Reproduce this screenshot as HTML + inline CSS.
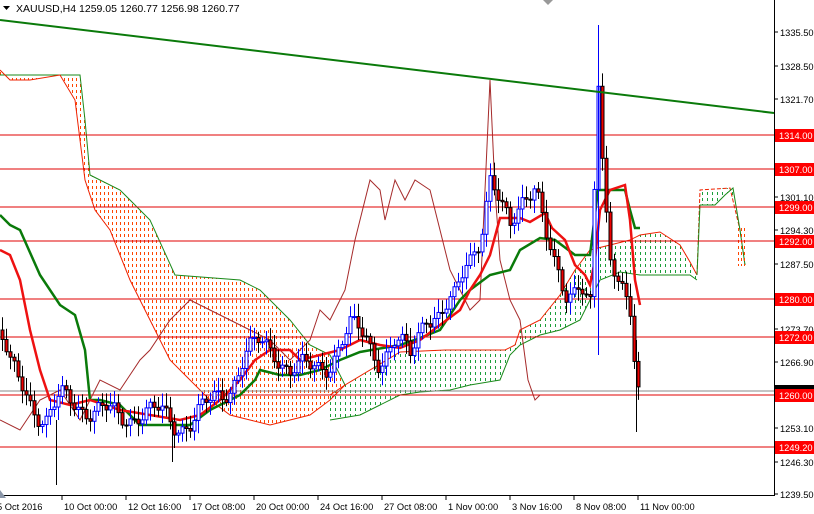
<!DOCTYPE html>
<html><head><meta charset="utf-8"><style>
html,body{margin:0;padding:0;background:#fff;width:814px;height:514px;overflow:hidden;font-family:"Liberation Sans",sans-serif}
svg{position:absolute;left:0;top:0}
</style></head><body>
<svg id="s" width="814" height="514" xmlns="http://www.w3.org/2000/svg" font-family="Liberation Sans, sans-serif" font-size="9.3">
<defs id="defs"></defs>
<g id="clouds"></g>
<g stroke="#e00000" stroke-width="1">
<line x1="0" y1="135" x2="774" y2="135"/><line x1="0" y1="169" x2="774" y2="169"/>
<line x1="0" y1="207" x2="774" y2="207"/><line x1="0" y1="241" x2="774" y2="241"/>
<line x1="0" y1="299" x2="774" y2="299"/><line x1="0" y1="337" x2="774" y2="337"/>
<line x1="0" y1="395" x2="774" y2="395"/><line x1="0" y1="447" x2="774" y2="447"/>
</g>
<line x1="0" y1="391" x2="774" y2="391" stroke="#888" stroke-width="1"/>
<g id="lines"></g>
<g id="candles"></g>
<line x1="0" y1="20" x2="774" y2="113" stroke="#0a7a0a" stroke-width="2"/>
<line x1="774.5" y1="0" x2="774.5" y2="495" stroke="#000"/>
<line x1="0" y1="495.5" x2="775" y2="495.5" stroke="#000"/>
<g id="axis"></g>
<text x="16" y="12" font-size="10.5" fill="#000">XAUUSD,H4  1259.05 1260.77 1256.98 1260.77</text>
<polygon points="3,6 10,6 6.5,10" fill="#000"/>
<polygon points="543,0 553,0 548,5" fill="#999"/>
<polygon points="0,490 0,498 6,498" fill="#8a96a8"/>
</svg>
<script>
var NS="http://www.w3.org/2000/svg";
function el(p,t,a){var e=document.createElementNS(NS,t);for(var k in a)e.setAttribute(k,a[k]);(typeof p=="string"?document.getElementById(p):p).appendChild(e);return e;}
function pl(pts){return pts.map(function(p){return p[0]+","+p[1]}).join(" ");}
var cid=0;
function cloud(poly,col,step,x0,x1){
 cid++;var cp=el("defs","clipPath",{id:"c"+cid});el(cp,"polygon",{points:poly});
 var g=el("clouds","g",{"clip-path":"url(#c"+cid+")"});
 for(var x=x0;x<=x1;x+=step)el(g,"line",{x1:x+0.5,y1:0,x2:x+0.5,y2:495,stroke:col,"stroke-width":1,"stroke-dasharray":"3,3"});
}
var oTop=[[0,75],[80,75],[85,120],[90,175],[120,190],[150,220],[175,275],[240,280],[260,290],[290,320],[310,345],[330,355],[345,385]];
var oBot=[[0,70],[10,80],[30,80],[60,75],[75,100],[85,180],[95,210],[110,230],[130,280],[150,320],[170,360],[190,380],[210,400],[230,415],[250,420],[270,425],[290,420],[310,415],[330,400],[345,385]];
cloud(pl(oTop.concat(oBot.slice().reverse())),"#ff4500",4,0,345);
el("clouds","polyline",{points:pl(oTop),fill:"none",stroke:"#1a8a1a","stroke-width":1});
el("clouds","polyline",{points:pl(oBot),fill:"none",stroke:"#ee2200","stroke-width":1});
var gTop=[[330,395],[345,385],[400,352],[445,350],[505,350],[515,345],[520,330],[540,320],[560,295],[575,270],[590,250],[610,245],[630,240],[640,235],[660,232],[680,245],[690,262],[697,275]];
var gBot=[[330,420],[360,415],[380,405],[400,395],[420,392],[450,390],[470,385],[500,380],[510,355],[520,345],[540,335],[560,330],[580,320],[600,280],[620,272],[640,275],[690,275],[697,280]];
cloud(pl(gTop.concat(gBot.slice().reverse())),"#1a9e3a",5,330,697);
el("clouds","polyline",{points:pl(gTop),fill:"none",stroke:"#ee2200","stroke-width":1});
el("clouds","polyline",{points:pl(gBot),fill:"none",stroke:"#1a8a1a","stroke-width":1});
var g2T=[[697,275],[700,190],[730,188],[740,230],[745,265]],g2B=[[697,275],[700,205],[715,205],[725,195],[733,188],[740,230],[745,265]];
cloud(pl(g2T.concat(g2B.slice().reverse())),"#1a9e3a",5,697,745);
el("clouds","polyline",{points:pl(g2T),fill:"none",stroke:"#ee2200","stroke-width":1,"stroke-dasharray":"4,2"});
el("clouds","polyline",{points:pl(g2B),fill:"none",stroke:"#1a8a1a","stroke-width":1});
cloud("738,228 745,228 745,266 738,266","#ff4500",3,738,745);
var chik=[[0,420],[20,430],[40,400],[60,390],[80,420],[100,380],[120,390],[140,360],[150,350],[170,320],[190,300],[210,310],[230,320],[250,330],[270,340],[290,360],[310,340],[320,310],[330,320],[345,290],[355,240],[370,180],[380,190],[385,220],[395,180],[405,200],[415,180],[430,190],[440,230],[450,270],[460,290],[470,310],[480,300],[490,80],[495,190],[500,260],[510,300],[520,320],[528,380],[535,400],[540,395]];
el("lines","polyline",{points:pl(chik),fill:"none",stroke:"#a52a2a","stroke-width":1});
var kij=[[0,215],[10,225],[20,230],[40,275],[60,305],[75,315],[85,350],[90,400],[100,400],[120,405],[140,425],[190,425],[210,410],[240,395],[255,380],[260,370],[280,375],[300,375],[320,370],[340,360],[360,352],[400,345],[420,338],[440,330],[460,300],[470,290],[490,275],[510,270],[520,250],[540,238],[555,240],[575,255],[590,255],[598,190],[625,190],[630,210],[635,228],[640,228]];
el("lines","polyline",{points:pl(kij),fill:"none",stroke:"#0a7a0a","stroke-width":2.5});
var ten=[[0,250],[10,255],[20,280],[30,330],[40,370],[50,400],[70,405],[90,400],[120,410],[150,415],[180,420],[200,415],[220,400],[240,380],[255,360],[270,350],[290,350],[300,360],[320,355],[340,350],[360,340],[380,345],[400,348],[420,340],[440,325],[460,310],[470,290],[480,275],[490,255],[500,218],[520,218],[530,222],[545,213],[552,228],[565,240],[575,265],[585,275],[590,285],[595,260],[600,210],[610,190],[625,185],[630,220],[635,280],[640,305]];
el("lines","polyline",{points:pl(ten),fill:"none",stroke:"#ee1111","stroke-width":2.5});
var pr=[[0,330],[10,370],[30,400],[45,420],[60,400],[80,405],[100,410],[120,420],[140,410],[160,415],[175,425],[190,420],[210,405],[230,385],[245,355],[260,345],[275,350],[290,370],[310,370],[330,360],[350,330],[365,335],[380,360],[395,345],[410,355],[425,310],[440,320],[455,300],[465,260],[480,235],[490,185],[500,210],[510,225],[520,195],[535,185],[545,240],[555,270],[565,290],[580,280],[590,310],[598,90],[604,200],[610,260],[620,270],[630,310],[637,395],[641,400]];
function py(x){for(var i=1;i<pr.length;i++){if(x<=pr[i][0]){var a=pr[i-1],b=pr[i];return a[1]+(b[1]-a[1])*(x-a[0])/(b[0]-a[0]);}}return 400;}
var prev=py(0);
for(var x=2;x<=640;x+=4){
 var c=py(x)+Math.sin(x*1.7)*10+Math.sin(x*0.37)*6, o=prev;
 var hi=Math.min(o,c)-3-Math.abs(Math.sin(x*0.9))*10, lo=Math.max(o,c)+3+Math.abs(Math.cos(x*1.3))*10;
 var up=c<o, col=up?"#0000ff":"#000";
 el("candles","line",{x1:x+0.5,y1:hi,x2:x+0.5,y2:lo,stroke:col,"stroke-width":1});
 var t=Math.min(o,c),h=Math.max(Math.abs(o-c),1);
 el("candles","rect",{x:x-1,y:t,width:3,height:h,fill:up?"#fff":"#ee0000",stroke:col,"stroke-width":1});
 prev=c;
}
el("candles","line",{x1:598.5,y1:25,x2:598.5,y2:355,stroke:"#0000ff"});
el("candles","line",{x1:636.5,y1:340,x2:636.5,y2:432,stroke:"#000"});
el("candles","line",{x1:56.5,y1:420,x2:56.5,y2:485,stroke:"#000"});
el("candles","line",{x1:172.5,y1:420,x2:172.5,y2:462,stroke:"#000"});
var labs=[[32,"1335.50"],[66,"1328.50"],[99,"1321.70"],[197,"1301.10"],[230,"1294.30"],[264,"1287.50"],[329,"1273.70"],[362,"1266.90"],[428,"1253.10"],[462,"1246.30"],[494,"1239.50"]];
labs.forEach(function(l){el("axis","line",{x1:774,y1:l[0],x2:778,y2:l[0],stroke:"#000"});var t=el("axis","text",{x:780,y:l[0]+4,fill:"#000"});t.textContent=l[1];});
var red=[[135,"1314.00"],[169,"1307.00"],[207,"1299.00"],[241,"1292.00"],[299,"1280.00"],[337,"1272.00"],[395,"1260.00"],[447,"1249.20"]];
el("axis","rect",{x:775,y:385,width:39,height:5,fill:"#000"});
red.forEach(function(l){el("axis","rect",{x:775,y:l[0]-6,width:39,height:13,fill:"#f00"});var t=el("axis","text",{x:779,y:l[0]+4,fill:"#fff"});t.textContent=l[1];});
var bl=[[0,"5 Oct 2016"],[63,"10 Oct 00:00"],[127,"12 Oct 16:00"],[191,"17 Oct 08:00"],[255,"20 Oct 00:00"],[319,"24 Oct 16:00"],[383,"27 Oct 08:00"],[447,"1 Nov 00:00"],[511,"3 Nov 16:00"],[575,"8 Nov 08:00"],[639,"11 Nov 00:00"]];
bl.forEach(function(l,i){if(i>0)el("axis","line",{x1:l[0]-1,y1:495,x2:l[0]-1,y2:500,stroke:"#000"});var t=el("axis","text",{x:i==0?-3:l[0]+1,y:510,fill:"#000"});t.textContent=l[1];});
</script>
</body></html>
